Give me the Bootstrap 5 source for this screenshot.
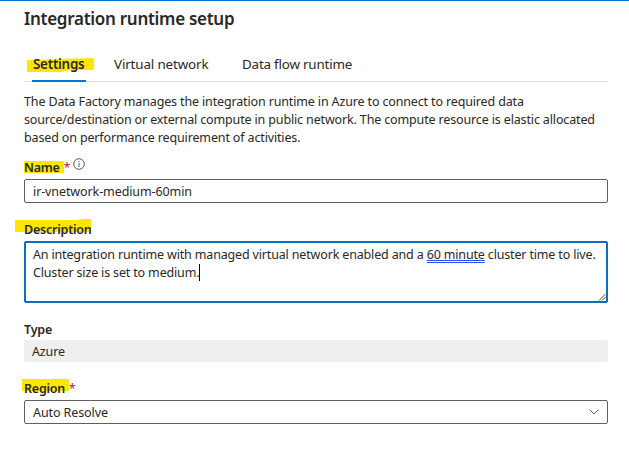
<!DOCTYPE html>
<html lang="en">
<head>
<meta charset="utf-8">
<meta name="viewport" content="width=device-width, initial-scale=1">
<title>Integration runtime setup</title>
<link href="https://cdn.jsdelivr.net/npm/bootstrap@5.3.0/dist/css/bootstrap.min.css" rel="stylesheet">
<style>
body{font-family:"Noto Sans","Open Sans",sans-serif;font-size:12.5px;line-height:18px;letter-spacing:-.14px;color:#292827;background:#fff;overflow:hidden}
.panel{height:453px;border-top:1px solid #0078d4;padding:0 21px 0 24px;isolation:isolate}
.title{font-size:17px;line-height:24px;font-weight:600;margin:0;padding-top:6px;letter-spacing:-.28px}
.tabs{height:37px;margin-top:14px;border-bottom:1px solid #e1dfdd;font-size:13.4px}
.tabs .nav-link{padding:8px 0 0;line-height:23px;height:37px;color:#292827;position:relative;white-space:nowrap}
.tabs .tab-a{width:54px;margin-left:8px;padding-left:1px;font-weight:600;letter-spacing:-.25px;border-bottom:2px solid #0078d4}
.tab-b{margin-left:28px;width:95px}
.tabs .tab-c{margin-left:33px;letter-spacing:-.2px}
.intro{margin:11px 0;height:54px;white-space:nowrap;letter-spacing:-.145px}
.field{margin-bottom:17px}
.field-label{font-weight:600;height:18px;line-height:20px;margin-bottom:3px;letter-spacing:-.22px}
.box{border:1px solid #605e5c;border-radius:2px;height:24px;padding:0 8px;line-height:24px;letter-spacing:-.1px}
.area{border:2px solid #106ebe;border-radius:2px;height:62px;padding:3px 7px;position:relative;white-space:nowrap;letter-spacing:-.16px}
.plain{background:#efefef;border-radius:2px;height:22px;line-height:24px;padding:0 8px;margin-top:-1px}
.req{color:#a4262c;font-weight:400;font-size:12px;margin-left:4px}
.info{margin-left:3px}
.hl{position:relative}
.hl::before{content:"";position:absolute;z-index:-1;background:#ffe600;height:12px;top:3px;left:0;width:40px}
.tabs .hl-set::before{left:-5px;width:67px;height:14px;top:13px;clip-path:polygon(0 14%,50% 8%,100% 0,100% 86%,65% 88%,50% 100%,0 100%)}
.hl-desc::before{left:-9px;width:76px;top:-1px;height:13px;clip-path:polygon(0 8%,80% 8%,90% 0,100% 0,100% 100%,0 100%)}
.hl-reg::before{left:-2px;width:47px;top:0}
.region-value{padding-top:2px}
.grammar{text-decoration:underline double #2b4fff 1px;text-underline-offset:1px;text-decoration-skip-ink:none}
.caret{display:inline-block;width:1px;height:17px;background:#000;vertical-align:top}
.grip{position:absolute;right:0;bottom:0}
</style>
</head>
<body>
<main class="panel">
  <h1 class="title">Integration runtime setup</h1>
  <nav class="tabs nav flex-nowrap">
    <a class="nav-link active tab-a hl hl-set">Settings</a>
    <a class="nav-link tab-b">Virtual network</a>
    <a class="nav-link tab-c">Data flow runtime</a>
  </nav>
  <p class="intro">The Data Factory manages the integration runtime in Azure to connect to required data<br>source/destination or external compute in public network. The compute resource is elastic allocated<br>based on performance requirement of activities.</p>

  <div class="field">
    <div class="field-label d-flex"><span class="hl">Name</span><span class="req">*</span>
      <svg class="info" width="12" height="12" viewBox="0 0 12 12" fill="none" stroke="#605e5c"><circle cx="6" cy="6" r="5.3"/><path d="M6 5v4M6 3v1"/></svg>
    </div>
    <div class="box">ir-vnetwork-medium-60min</div>
  </div>

  <div class="field">
    <div class="field-label hl hl-desc">Description</div>
    <div class="area">An integration runtime with managed virtual network enabled and a <span class="grammar">60 minute</span> cluster time to live.<br>Cluster size is set to medium.<span class="caret"></span>
      <svg class="grip" width="8" height="8" viewBox="0 0 8 8" stroke="#555" fill="none"><path d="M1 7.500L7.500 1M4 7.500L7.500 4"/></svg>
    </div>
  </div>

  <div class="field">
    <div class="field-label">Type</div>
    <div class="plain">Azure</div>
  </div>

  <div class="field">
    <div class="field-label d-flex hl hl-reg">Region<span class="req">*</span></div>
    <div class="box d-flex justify-content-between align-items-center"><span class="region-value">Auto Resolve</span>
      <svg width="10" height="6" viewBox="0 0 10 6" fill="none" stroke="#605e5c"><path d="M.5 .5L5 5L9.500 .5"/></svg>
    </div>
  </div>
</main>
</body>
</html>
